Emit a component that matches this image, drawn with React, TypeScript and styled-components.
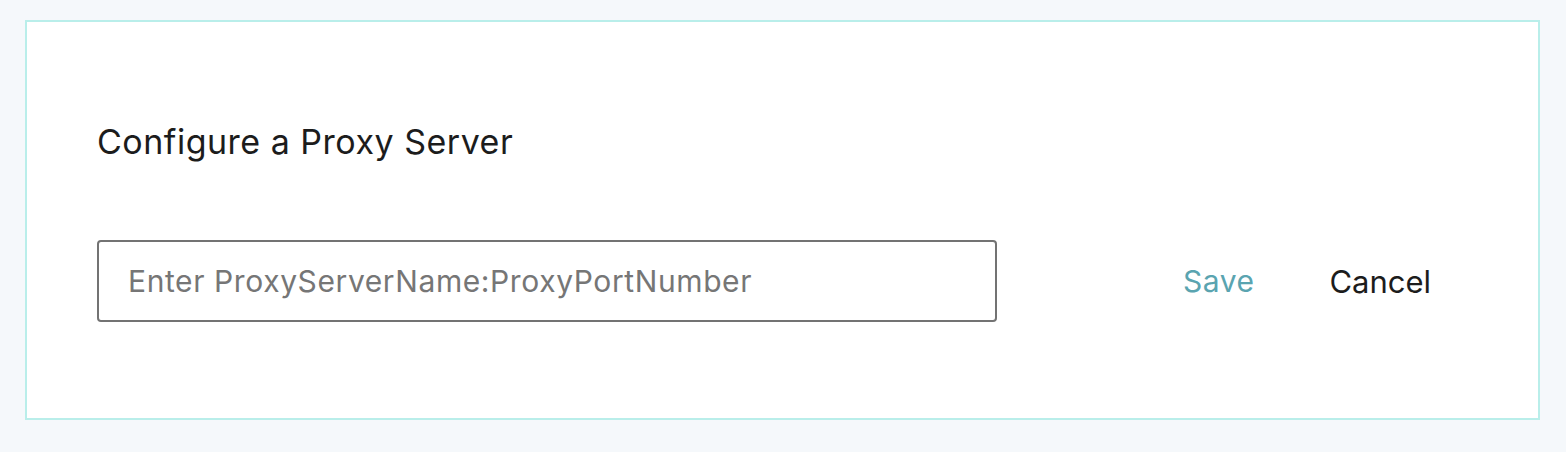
import * as React from 'react';
import styled, { createGlobalStyle } from 'styled-components';

const GlobalStyle = createGlobalStyle`
	html, body {
		margin: 0;
		padding: 0;
		background: #f5f8fb;
		font-family: Inter, "Noto Sans", sans-serif;
	}
`;

export default function App() {
	return (
		<>
			<GlobalStyle />
			<Page>
				<Card>
					<Title>Configure a Proxy Server</Title>
					<Row>
						<ProxyInput placeholder="Enter ProxyServerName:ProxyPortNumber" />
						<Actions>
							<LinkButton primary>Save</LinkButton>
							<LinkButton>Cancel</LinkButton>
						</Actions>
					</Row>
				</Card>
			</Page>
		</>
	);
}

const Page = styled.div`
	padding: 20px 26px 32px 25px;
`;

const Card = styled.div`
	box-sizing: border-box;
	height: 400px;
	border: 2px solid #b9eeea;
	background: #fff;
	padding: 100px 0 0 70px;
`;

const Title = styled.h2`
	margin: 0;
	font-size: 34px;
	font-weight: 400;
	letter-spacing: 0.5px;
	line-height: 40px;
	color: #1c1c1c;
`;

const Row = styled.div`
	display: flex;
	align-items: center;
	margin-top: 78px;
`;

const ProxyInput = styled.input`
	box-sizing: border-box;
	width: 900px;
	height: 82px;
	border: 2px solid #737373;
	border-radius: 4px;
	padding: 0 0 0 29px;
	font-family: Inter, "Liberation Sans", sans-serif;
	font-size: 30px;
	letter-spacing: 0.6px;
	color: #333;
	outline: none;
	&::placeholder {
		color: #767676;
	}
`;

const Actions = styled.div`
	display: flex;
	align-items: center;
	gap: 75px;
	margin-left: 186px;
`;

const LinkButton = styled.button<{ primary?: boolean }>`
	border: none;
	background: none;
	padding: 0;
	cursor: pointer;
	font-family: inherit;
	font-size: ${(p) => (p.primary ? '30px' : '31px')};
	letter-spacing: ${(p) => (p.primary ? '0.5px' : '0')};
	color: ${(p) => (p.primary ? '#5aa4b0' : '#1c1c1c')};
`;
